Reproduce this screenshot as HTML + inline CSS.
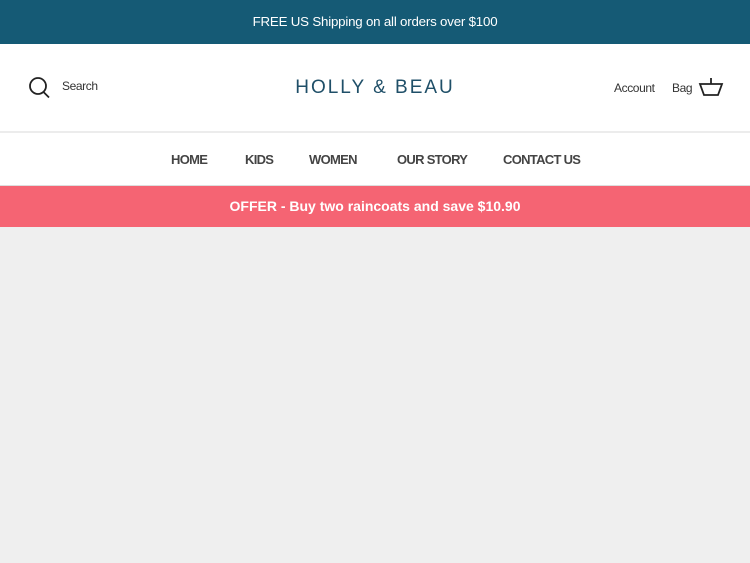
<!DOCTYPE html>
<html><head><style>
*{margin:0;padding:0;box-sizing:border-box}
body{width:750px;height:563px;background:#efefef;font-family:"Liberation Sans",sans-serif;overflow:hidden;position:relative}
.top{position:absolute;top:0;left:0;width:750px;height:44px;background:#155a75;color:#fff;font-size:13.3px;text-align:center;line-height:43px;letter-spacing:-0.2px}
.hdr{position:absolute;top:44px;left:0;width:750px;height:87px;background:#fff}
.nav{position:absolute;top:131px;left:0;width:750px;height:55px;background:#fff;border-top:2px solid #ececec;border-bottom:1px solid #ddd}
.nav span{position:absolute;top:19px;font-size:13px;font-weight:bold;color:#444;letter-spacing:-0.7px}
.offer{position:absolute;top:186px;left:0;width:750px;height:41px;background:#f56473;color:#fff;font-weight:bold;font-size:14px;text-align:center;line-height:41px}
.t{position:absolute;font-size:12px;color:#333;letter-spacing:-0.4px}
.logo{position:absolute;left:0;width:750px;top:33px;text-align:center;font-size:19px;letter-spacing:2px;color:#1f4f68}
</style></head><body>
<div class="top">FREE US Shipping on all orders over $100</div>
<div class="hdr">
<svg style="position:absolute;left:28px;top:33px" width="24" height="22" viewBox="0 0 24 22"><circle cx="10" cy="9" r="8" fill="none" stroke="#222" stroke-width="1.8"/><line x1="15.5" y1="15" x2="21" y2="20.5" stroke="#222" stroke-width="1.8"/></svg>
<div class="t" style="left:62px;top:35px">Search</div>
<div class="logo">HOLLY &amp; BEAU</div>
<div class="t" style="left:614px;top:37px">Account</div>
<div class="t" style="left:672px;top:37px">Bag</div>
<svg style="position:absolute;left:698px;top:32px" width="26" height="22" viewBox="0 0 26 22"><path d="M13 2V8M2 8H24L20 19H6Z" fill="none" stroke="#222" stroke-width="1.8"/></svg>
</div>
<div class="nav">
<span style="left:171px">HOME</span><span style="left:245px">KIDS</span><span style="left:309px">WOMEN</span><span style="left:397px">OUR STORY</span><span style="left:503px">CONTACT US</span>
</div>
<div class="offer">OFFER - Buy two raincoats and save $10.90</div>
</body></html>
